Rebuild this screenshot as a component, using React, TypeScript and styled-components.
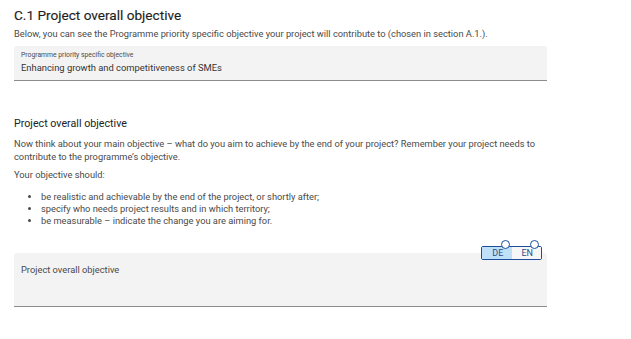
import React from "react";
import styled, { createGlobalStyle } from "styled-components";

const Global = createGlobalStyle`
  html, body { margin: 0; padding: 0; background: #fff; }
  body { font-family: Roboto, "Liberation Sans", sans-serif; color: #333; }
`;

const Page = styled.div`
  padding: 6px 84px 0 14px;
  display: flex;
  flex-direction: column;
`;

const Title = styled.h2`
  margin: 0;
  font-size: 13.6px;
  font-weight: 400;
  color: #1e1e1e;
  line-height: 18px;
  -webkit-text-stroke: 0.15px #1e1e1e;
`;

const Intro = styled.p`
  margin: 4px 0 0;
  font-size: 9.3px;
  line-height: 12px;
  color: #4a4a4a;
`;

const Field = styled.div<{ $height: number; $top: number }>`
  margin-top: ${(p) => p.$top}px;
  height: ${(p) => p.$height}px;
  box-sizing: border-box;
  background: #f3f3f3;
  border-bottom: 1.5px solid #8c8c8c;
  border-radius: 3px 3px 0 0;
  padding: 0 7px;
  display: flex;
  flex-direction: column;
  position: relative;
`;

const SmallLabel = styled.div`
  font-size: 6.8px;
  line-height: 8px;
  color: #4a4a4a;
  margin-top: 5px;
`;

const Value = styled.div`
  font-size: 9.4px;
  line-height: 12px;
  color: #333;
  margin-top: 3px;
`;

const Placeholder = styled.div`
  font-size: 9.3px;
  line-height: 12px;
  color: #4a4a4a;
  margin-top: 11px;
`;

const Subtitle = styled.h3`
  margin: 37px 0 0;
  font-size: 10.7px;
  font-weight: 400;
  color: #222;
  line-height: 12px;
`;

const Para = styled.p<{ $top: number }>`
  margin: ${(p) => p.$top}px 0 0;
  font-size: 9.3px;
  line-height: 13px;
  color: #4a4a4a;
`;

const List = styled.ul`
  margin: 10.5px 0 0;
  padding-left: 27px;
  font-size: 9.3px;
  line-height: 12px;
  color: #4a4a4a;
  li::marker { font-size: 10px; }
`;

const ToggleRow = styled.div`
  display: flex;
  justify-content: flex-end;
  margin-top: 19px;
  padding-right: 5px;
  position: relative;
  z-index: 2;
`;

const Toggle = styled.div`
  display: flex;
  box-sizing: border-box;
  border: 1.3px solid #1b4f9c;
  border-radius: 2px;
  height: 14px;
  width: 61px;
  margin-bottom: -7px;
  background: #fff;
`;

const Lang = styled.div<{ $active?: boolean }>`
  flex: 1;
  position: relative;
  display: flex;
  align-items: center;
  justify-content: center;
  padding-left: 2px;
  font-size: 9px;
  color: #2c4f86;
  background: ${(p) => (p.$active ? "#bee0f8" : "#f7f7f7")};
`;

const Dot = styled.span`
  position: absolute;
  top: -7.5px;
  right: 2px;
  width: 9px;
  height: 9px;
  box-sizing: border-box;
  border-radius: 50%;
  border: 1.2px solid #1b4f9c;
  background: #fff;
`;

export default function App() {
  return (
    <>
      <Global />
      <Page>
        <Title>C.1 Project overall objective</Title>
        <Intro>
          Below, you can see the Programme priority specific objective your project will contribute to (chosen in section A.1.).
        </Intro>
        <Field $height={35} $top={6}>
          <SmallLabel>Programme priority specific objective</SmallLabel>
          <Value>Enhancing growth and competitiveness of SMEs</Value>
        </Field>
        <Subtitle>Project overall objective</Subtitle>
        <Para $top={6.5}>
          Now think about your main objective – what do you aim to achieve by the end of your project? Remember your project needs to contribute to the programme’s objective.
        </Para>
        <Para $top={5}>Your objective should:</Para>
        <List>
          <li>be realistic and achievable by the end of the project, or shortly after;</li>
          <li>specify who needs project results and in which territory;</li>
          <li>be measurable – indicate the change you are aiming for.</li>
        </List>
        <ToggleRow>
          <Toggle>
            <Lang $active>
              DE
              <Dot />
            </Lang>
            <Lang>
              EN
              <Dot />
            </Lang>
          </Toggle>
        </ToggleRow>
        <Field $height={54} $top={0}>
          <Placeholder>Project overall objective</Placeholder>
        </Field>
      </Page>
    </>
  );
}
